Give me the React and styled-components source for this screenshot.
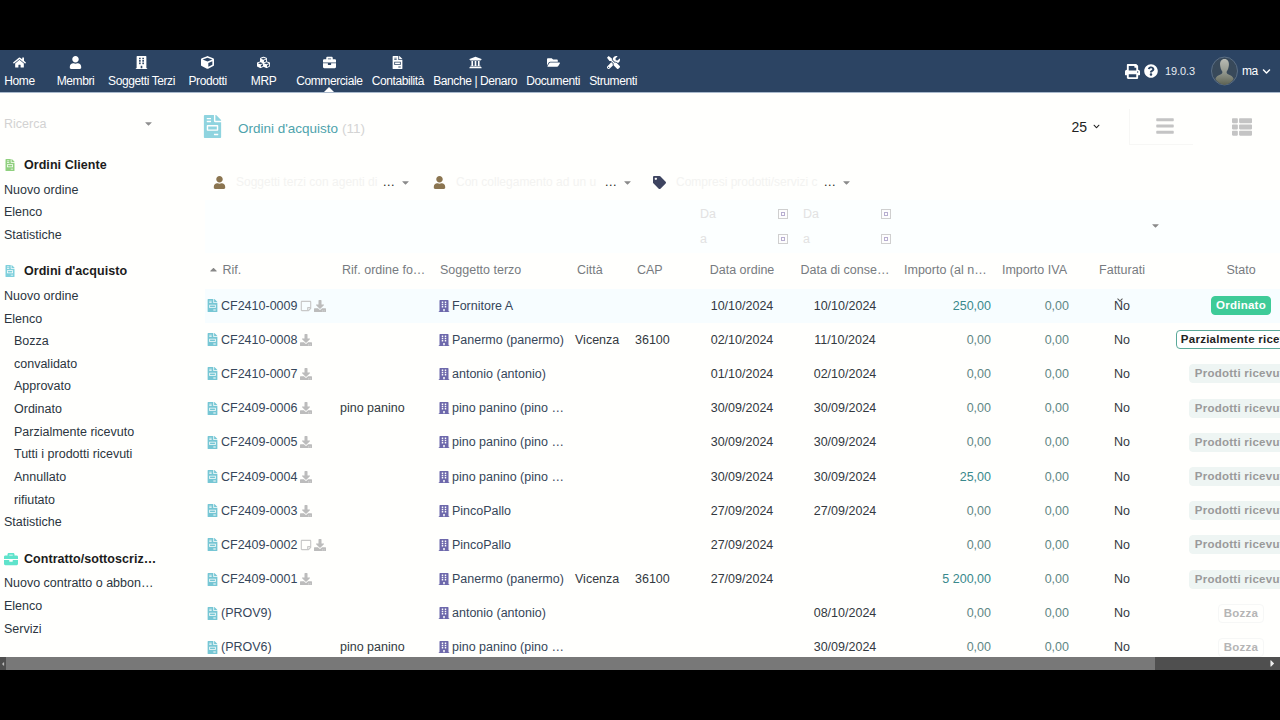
import React from "react";
import styled, { createGlobalStyle } from "styled-components";
import {
  FaHome, FaUser, FaBuilding, FaCube, FaCubes, FaBriefcase, FaFileInvoice, FaUniversity,
  FaFolderOpen, FaTools, FaPrint, FaQuestionCircle, FaChevronDown, FaTag, FaBars, FaThList,
  FaDownload, FaRegStickyNote, FaCaretDown, FaCaretUp, FaCaretLeft, FaCaretRight,
} from "react-icons/fa";

const GlobalStyle = createGlobalStyle`
  html, body { margin: 0; padding: 0; background: #000; }
  * { box-sizing: border-box; }
  body { font-family: "Liberation Sans", Arial, sans-serif; font-size: 12.5px; color: #333; }
`;

const COLUMNS = "133px 100px 137px 60px 63px 88px 118px 87px 78px 106px 132px";

const navItems = [
  ["Home", FaHome], ["Membri", FaUser], ["Soggetti Terzi", FaBuilding], ["Prodotti", FaCube], ["MRP", FaCubes],
  ["Commerciale", FaBriefcase], ["Contabilità", FaFileInvoice], ["Banche | Denaro", FaUniversity],
  ["Documenti", FaFolderOpen], ["Strumenti", FaTools],
];

const sections = [
  { title: "Ordini Cliente", icon: FaFileInvoice, size: 12, color: "#8fd07e", items: [["Nuovo ordine"], ["Elenco"], ["Statistiche"]] },
  {
    title: "Ordini d'acquisto", icon: FaFileInvoice, size: 12, color: "#7fd0dc",
    items: [["Nuovo ordine"], ["Elenco"], ["Bozza", 1], ["convalidato", 1], ["Approvato", 1], ["Ordinato", 1],
      ["Parzialmente ricevuto", 1], ["Tutti i prodotti ricevuti", 1], ["Annullato", 1], ["rifiutato", 1], ["Statistiche"]],
  },
  { title: "Contratto/sottoscriz…", icon: FaBriefcase, size: 14, color: "#5fe3cb", items: [["Nuovo contratto o abbon…"], ["Elenco"], ["Servizi"]] },
];

const rows = [
  { ref: "CF2410-0009", note: true, sog: "Fornitore A", d1: "10/10/2024", d2: "10/10/2024", imp: "250,00", stato: "Ordinato", kind: "green", first: true },
  { ref: "CF2410-0008", sog: "Panermo (panermo)", city: "Vicenza", cap: "36100", d1: "02/10/2024", d2: "11/10/2024", imp: "0,00", stato: "Parzialmente ricevuti", kind: "outline" },
  { ref: "CF2410-0007", sog: "antonio (antonio)", d1: "01/10/2024", d2: "02/10/2024", imp: "0,00", stato: "Prodotti ricevuti", kind: "soft" },
  { ref: "CF2409-0006", rif: "pino panino", sog: "pino panino (pino …", d1: "30/09/2024", d2: "30/09/2024", imp: "0,00", stato: "Prodotti ricevuti", kind: "soft" },
  { ref: "CF2409-0005", sog: "pino panino (pino …", d1: "30/09/2024", d2: "30/09/2024", imp: "0,00", stato: "Prodotti ricevuti", kind: "soft" },
  { ref: "CF2409-0004", sog: "pino panino (pino …", d1: "30/09/2024", d2: "30/09/2024", imp: "25,00", stato: "Prodotti ricevuti", kind: "soft" },
  { ref: "CF2409-0003", sog: "PincoPallo", d1: "27/09/2024", d2: "27/09/2024", imp: "0,00", stato: "Prodotti ricevuti", kind: "soft" },
  { ref: "CF2409-0002", note: true, sog: "PincoPallo", d1: "27/09/2024", imp: "0,00", stato: "Prodotti ricevuti", kind: "soft" },
  { ref: "CF2409-0001", sog: "Panermo (panermo)", city: "Vicenza", cap: "36100", d1: "27/09/2024", imp: "5 200,00", stato: "Prodotti ricevuti", kind: "soft" },
  { ref: "(PROV9)", draft: true, sog: "antonio (antonio)", d2: "08/10/2024", imp: "0,00", stato: "Bozza", kind: "ghost" },
  { ref: "(PROV6)", draft: true, rif: "pino panino", sog: "pino panino (pino …", d2: "30/09/2024", imp: "0,00", stato: "Bozza", kind: "ghost" },
];

function Avatar() {
  return (
    <AvatarBox viewBox="0 0 28 30">
      <defs>
        <linearGradient id="av" x1="0" y1="0" x2="0" y2="1">
          <stop offset="0%" stopColor="#b9bbb4" />
          <stop offset="55%" stopColor="#8f948a" />
          <stop offset="100%" stopColor="#5d6252" />
        </linearGradient>
      </defs>
      <ellipse cx="14" cy="15" rx="13.500" ry="14.500" fill="#38495a" stroke="#5c6f86" />
      <path d="M14 2.500c3.200 0 4.800 2.600 4.600 6-.2 3-1.200 5.600-2.300 7-.4 1.500.2 2.400 2 3.200 2.200 1 4.200 1.800 5.200 4.600A13.500 14.500 0 0 1 14 29.500a13.500 14.500 0 0 1-9.500-6.200c1-2.800 3-3.600 5.200-4.600 1.800-.8 2.400-1.700 2-3.200-1.100-1.400-2.100-4-2.300-7-.2-3.400 1.400-6 4.600-6z" fill="url(#av)" />
    </AvatarBox>
  );
}

function CalendarMark() {
  return (
    <svg width="10" height="10" viewBox="0 0 10 10">
      <rect x="0.500" y="0.500" width="9" height="9" fill="#fdfdfd" stroke="#cfcfcf" />
      <rect x="3.500" y="3.500" width="3" height="3" fill="none" stroke="#b7aed0" />
    </svg>
  );
}

function Filter({ icon: Icon, color, label, width }) {
  return (
    <FilterItem>
      <Icon color={color} size={13} />
      <FilterLabel $width={width}>{label}</FilterLabel>
      <Dots>...</Dots>
      <FaCaretDown color="#8a8a8a" size={11} />
    </FilterItem>
  );
}

function DateField({ label }) {
  return (
    <DateRow>
      <span>{label}</span>
      <CalendarMark />
    </DateRow>
  );
}

export default function App() {
  return (
    <>
      <GlobalStyle />
      <Frame>
        <Navbar>
          <NavList>
            {navItems.map(([label, Icon]) => (
              <NavItem key={label} $active={label === "Commerciale"}>
                <Icon size={13} />
                <span>{label}</span>
              </NavItem>
            ))}
          </NavList>
          <NavRight>
            <FaPrint size={15} />
            <FaQuestionCircle size={14} />
            <Version>19.0.3</Version>
            <Avatar />
            <UserName>ma</UserName>
            <FaChevronDown size={9} />
          </NavRight>
        </Navbar>

        <Body>
          <Sidebar>
            <SearchBox>
              <span>Ricerca</span>
              <FaCaretDown color="#8f8f8f" size={11} />
            </SearchBox>
            {sections.map((s) => (
              <Section key={s.title}>
                <SectionTitle>
                  <s.icon color={s.color} size={s.size} />
                  <span>{s.title}</span>
                </SectionTitle>
                {s.items.map(([label, sub], i) => (
                  <SideLink key={i} $sub={sub}>{label}</SideLink>
                ))}
              </Section>
            ))}
          </Sidebar>

          <Main>
            <TitleRow>
              <TitleIcon color="#8fd4df" size={23} />
              <Title>Ordini d'acquisto <small>(11)</small></Title>
              <PageSize>25 <FaChevronDown size={7} /></PageSize>
              <ViewButton><FaBars size={20} /></ViewButton>
              <ViewButton $plain><FaThList size={20} /></ViewButton>
            </TitleRow>

            <FilterRow>
              <Filter icon={FaUser} color="#8b7550" label="Soggetti terzi con agenti di" width="147px" />
              <Filter icon={FaUser} color="#8b7550" label="Con collegamento ad un u" width="149px" />
              <Filter icon={FaTag} color="#3e4460" label="Compresi prodotti/servizi c" width="148px" />
            </FilterRow>

            <SearchRow>
              <span /><span /><span /><span /><span />
              <DateCell><DateField label="Da" /><DateField label="a" /></DateCell>
              <DateCell $indent><DateField label="Da" /><DateField label="a" /></DateCell>
              <span /><span />
              <CaretCell><FaCaretDown color="#8a8a8a" size={11} /></CaretCell>
            </SearchRow>

            <HeadRow>
              <HeadCell><FaCaretUp color="#888" size={11} /> Rif.</HeadCell>
              <HeadCell $pad="4px">Rif. ordine fo…</HeadCell>
              <HeadCell $pad="2px">Soggetto terzo</HeadCell>
              <HeadCell $pad="2px">Città</HeadCell>
              <HeadCell $pad="2px">CAP</HeadCell>
              <HeadCell $align="center">Data ordine</HeadCell>
              <HeadCell $align="center">Data di conse…</HeadCell>
              <HeadCell>Importo (al n…</HeadCell>
              <HeadCell $align="right">Importo IVA</HeadCell>
              <HeadCell $align="center">Fatturati</HeadCell>
              <HeadCell $align="center">Stato</HeadCell>
            </HeadRow>

            {rows.map((r) => (
              <Row key={r.ref} $first={r.first}>
                <RefCell>
                  <FaFileInvoice color="#76c6d4" size={13} />
                  <span>{r.ref}</span>
                  {r.note && <FaRegStickyNote color="#c8c8c8" size={12} />}
                  {!r.draft && <FaDownload color="#bcbcbc" size={12} />}
                </RefCell>
                <Cell $pad="2px">{r.rif}</Cell>
                <SogCell>
                  <FaBuilding color="#6d68ab" size={12} />
                  <span>{r.sog}</span>
                </SogCell>
                <Cell>{r.city}</Cell>
                <Cell>{r.cap}</Cell>
                <Cell $align="center">{r.d1}</Cell>
                <Cell $align="center">{r.d2}</Cell>
                <Amount $strong={r.imp !== "0,00"}>{r.imp}</Amount>
                <Amount>0,00</Amount>
                <Cell $align="center" $cursor={r.first}>No</Cell>
                <Cell $align="center"><Badge $kind={r.kind}>{r.stato}</Badge></Cell>
              </Row>
            ))}
          </Main>
        </Body>

        <Scrollbar>
          <FaCaretLeft size={6} color="#bbb" />
          <Thumb />
          <FaCaretRight size={11} color="#eee" />
        </Scrollbar>
      </Frame>
    </>
  );
}

const Frame = styled.div`
  width: 1280px;
  height: 620px;
  margin: 50px 0;
  background: #fffffd;
  display: flex;
  flex-direction: column;
  overflow: hidden;
`;

const Navbar = styled.header`
  height: 43px;
  flex: none;
  background: #2c4463;
  border-bottom: 1px solid #a9b9cc;
  color: #fff;
  display: flex;
  justify-content: space-between;
`;

const NavList = styled.nav`
  display: flex;
  margin-left: -8.5px;
`;

const NavItem = styled.div`
  position: relative;
  min-width: 56px;
  padding: 6px 4.6px 0;
  display: flex;
  flex-direction: column;
  align-items: center;
  gap: 5px;
  font-size: 12px;
  letter-spacing: -0.4px;
  white-space: nowrap;
  span { line-height: 14px; }
  ${(p) => p.$active && `
    &::after {
      content: "";
      position: absolute;
      left: 50%;
      bottom: 0;
      margin-left: -5px;
      border: 5px solid transparent;
      border-top: 0;
      border-bottom-color: #fff;
    }
  `}
`;

const NavRight = styled.div`
  display: flex;
  align-items: center;
  gap: 4px;
  padding-right: 9px;
`;

const Version = styled.span`
  font-size: 11px;
  margin: 0 12px 0 3px;
  color: #e6ebf1;
  letter-spacing: -0.1px;
`;

const AvatarBox = styled.svg`
  width: 27px;
  height: 30px;
`;

const UserName = styled.span`
  font-size: 12px;
  letter-spacing: -0.3px;
`;

const Body = styled.div`
  flex: 1;
  min-height: 0;
  display: flex;
  overflow: hidden;
`;

const Sidebar = styled.aside`
  width: 205px;
  flex: none;
  padding: 19.5px 0 0 4px;
`;

const SearchBox = styled.div`
  width: 150px;
  height: 22px;
  margin-bottom: 19.5px;
  display: flex;
  align-items: center;
  justify-content: space-between;
  color: #d2d2d2;
`;

const Section = styled.section`
  margin-bottom: 14px;
`;

const SectionTitle = styled.div`
  height: 22px;
  margin-bottom: 2.500px;
  display: grid;
  grid-template-columns: 20px 1fr;
  align-items: center;
  font-weight: bold;
  color: #1c1c1c;
  letter-spacing: 0.05px;
  white-space: nowrap;
`;

const SideLink = styled.div`
  height: 22.65px;
  line-height: 22.65px;
  padding-left: ${(p) => (p.$sub ? "10px" : "0")};
  color: #2b3540;
  white-space: nowrap;
`;

const Main = styled.main`
  flex: 1;
  min-width: 0;
`;

const TitleRow = styled.div`
  height: 71px;
  padding-bottom: 4px;
  display: flex;
  align-items: center;
`;

const TitleIcon = styled(FaFileInvoice)`
  margin-left: -4px;
`;

const Title = styled.div`
  margin: 3px 0 0 14px;
  font-size: 13.5px;
  color: #4ea3ac;
  small { font-size: 13.5px; color: #d4d4d4; }
`;

const PageSize = styled.div`
  margin-left: auto;
  display: flex;
  align-items: center;
  gap: 6px;
  font-size: 14px;
  color: #222;
  margin-right: 29px;
`;

const ViewButton = styled.div`
  width: ${(p) => (p.$plain ? "87px" : "64px")};
  height: 36px;
  display: flex;
  align-items: center;
  justify-content: ${(p) => (p.$plain ? "flex-end" : "center")};
  padding-right: ${(p) => (p.$plain ? "28px" : "0")};
  padding-left: ${(p) => (p.$plain ? "0" : "6px")};
  color: #c4c4c4;
  border-left: ${(p) => (p.$plain ? "0" : "1px solid #f7f7f5")};
  border-bottom: ${(p) => (p.$plain ? "0" : "1px solid #f7f7f5")};
`;

const FilterRow = styled.div`
  height: 36px;
  padding-left: 8px;
  display: flex;
  align-items: center;
`;

const FilterItem = styled.div`
  width: 220px;
  display: flex;
  align-items: center;
`;

const FilterLabel = styled.span`
  width: ${(p) => p.$width};
  margin-left: 10px;
  font-size: 12px;
  white-space: nowrap;
  color: #f3f3f1;
`;

const Dots = styled.span`
  width: 17px;
  color: #222;
  letter-spacing: 0.5px;
`;

const Grid = styled.div`
  display: grid;
  grid-template-columns: ${COLUMNS};
  align-items: center;
`;

const SearchRow = styled(Grid)`
  height: 53px;
  background: #fcffff;
`;

const DateCell = styled.div`
  padding-left: ${(p) => (p.$indent ? "17px" : "2px")};
`;

const DateRow = styled.div`
  width: 88px;
  height: 25px;
  display: flex;
  align-items: center;
  justify-content: space-between;
  color: #e2e2e2;
`;

const CaretCell = styled.div`
  padding-right: 14px;
  text-align: right;
`;

const HeadRow = styled(Grid)`
  height: 35.5px;
  padding-bottom: 2px;
`;

const HeadCell = styled.div`
  padding-left: ${(p) => p.$pad || "0"};
  padding-right: ${(p) => (p.$align === "right" ? "2px" : "0")};
  text-align: ${(p) => p.$align || "left"};
  color: #777b80;
  white-space: nowrap;
  svg { vertical-align: -1px; margin-left: 3px; }
`;

const Row = styled(Grid)`
  height: 34.2px;
  background: ${(p) => (p.$first ? "#f7fdff" : "transparent")};
`;

const Cell = styled.div`
  position: relative;
  padding-left: ${(p) => p.$pad || "0"};
  text-align: ${(p) => p.$align || "left"};
  color: #33393f;
  white-space: nowrap;
  ${(p) => p.$cursor && `
    &::before {
      content: "";
      position: absolute;
      left: 49px;
      top: -2px;
      width: 3px;
      height: 3px;
      border-right: 1px solid #555;
      border-bottom: 1px solid #555;
      transform: rotate(45deg);
    }
  `}
`;

const RefCell = styled.div`
  display: flex;
  align-items: center;
  gap: 2.5px;
  padding-left: 0.5px;
  color: #36465a;
  white-space: nowrap;
`;

const SogCell = styled(RefCell)`
  padding-left: 0;
  gap: 2px;
`;

const Amount = styled.div`
  text-align: right;
  color: ${(p) => (p.$strong ? "#39898c" : "#5f8785")};
`;

const badgeColors = {
  green: "background: #3ecb98; color: #fff; border: 1px solid #3ecb98; padding: 1px 4px;",
  outline: "background: #fff; color: #222; border: 1px solid #5aa999; padding: 1px 4px;",
  soft: "background: #eef5f3; color: #9a9a9a; border: 1px solid #eef5f3; padding: 1px 5px;",
  ghost: "background: #fffffd; color: #b5b5b5; border: 1px solid #f6f7f6; padding: 1px 5px;",
};

const Badge = styled.span`
  display: inline-block;
  border-radius: 4px;
  font-size: 11.5px;
  line-height: 15px;
  font-weight: bold;
  letter-spacing: 0.25px;
  white-space: nowrap;
  ${(p) => badgeColors[p.$kind]}
`;

const Scrollbar = styled.div`
  height: 13px;
  flex: none;
  background: #4f4f4f;
  display: flex;
  align-items: center;
  padding-right: 2px;
`;

const Thumb = styled.div`
  width: 1149px;
  height: 100%;
  margin-right: auto;
  background: #787878;
`;
